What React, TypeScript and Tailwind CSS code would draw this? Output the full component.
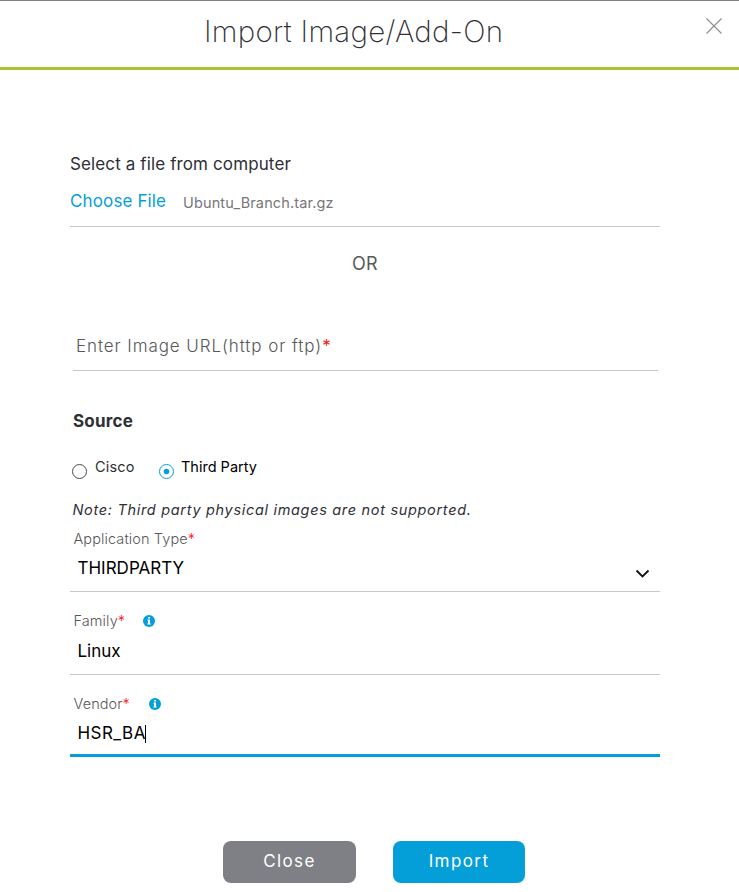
import type { ReactNode } from "react";

function InfoIcon() {
  return (
    <svg width="12" height="12" viewBox="0 0 12 12" className="shrink-0">
      <circle cx="6" cy="6" r="6" fill="#049fd9" />
      <path d="M5.1 2h1.9v1.5H5.1zM4.4 4.6H7v4h.7v.9H4.3v-.9H5V5.5h-.6z" fill="#fff" />
    </svg>
  );
}

function Radio({ checked }: { checked?: boolean }) {
  return (
    <svg width="15" height="15" viewBox="0 0 15 15" className="mt-[4px] shrink-0">
      <circle cx="7.5" cy="7.5" r="7" fill="#fff" stroke={checked ? "#049fd9" : "#4a4a52"} />
      {checked && <circle cx="7.5" cy="7.5" r="2.8" fill="#049fd9" />}
    </svg>
  );
}

function Label({ children, info }: { children: ReactNode; info?: ReactNode }) {
  return (
    <div className="flex h-5 items-center pl-[3.5px] text-[14.5px] font-light leading-5 text-[#58585b]">
      <span className="tracking-[0.1px]">
        {children}
        <span className="text-[#f00]">*</span>
      </span>
      {info}
    </div>
  );
}

export default function App() {
  return (
    <div className="h-[892px] w-[739px] overflow-hidden bg-white font-['Inter',sans-serif] text-[#2f2f36]">
      <header className="relative h-[70px] border-b-[3px] border-t border-b-[#abc233] border-t-[#808080]">
        <h1 className="ml-[204px] mt-[10px] whitespace-nowrap text-[29.5px] font-extralight leading-10 tracking-[0.27px]">Import Image/Add-On</h1>
        <svg width="16" height="16" viewBox="0 0 16 16" className="absolute left-[706px] top-[17px]">
          <path d="M.5.5l15 15M15.5.5l-15 15" stroke="#8b8c92" strokeWidth="1.1" />
        </svg>
      </header>

      <main className="ml-[70px] w-[590px] pt-[82px]">
        <section className="h-[75px] border-b border-[#c8c8c8]">
          <p className="text-[17px] leading-6 tracking-[0.12px]">Select a file from computer</p>
          <div className="mt-[13px] flex h-6 items-center whitespace-nowrap">
            <span className="w-[113px] text-[17px] leading-6 tracking-[0.13px] text-[#049fd9]">Choose File</span>
            <span className="pt-[3px] text-[14.5px] leading-6 tracking-[0.13px] text-[#77777b]">Ubuntu_Branch.tar.gz</span>
          </div>
        </section>
        <p className="mt-[25px] text-center text-[18px] leading-6 tracking-[0.3px] text-[#58585b]">OR</p>

        <div className="ml-[3px] mt-[58px] h-[37px] w-[585px] whitespace-nowrap border-b border-[#c8c8c8] pl-[3px] text-[17px] font-light leading-6 tracking-[0.92px] text-[#58585b]">
          Enter Image URL(http or ftp)<span className="text-[#f00]">*</span>
        </div>

        <h2 className="ml-[3px] mt-[38px] text-[17px] font-bold leading-6 tracking-[0.2px]">Source</h2>
        <div className="ml-[2px] mt-[24px] flex h-[30px] items-start whitespace-nowrap text-[14.5px] leading-5">
          <div className="flex h-5 w-[87px] gap-[8px]">
            <span className="pt-[3px]"><Radio /></span>
            <span className="tracking-[0.15px]">Cisco</span>
          </div>
          <div className="flex h-5 gap-[7px] text-black">
            <span className="pt-[3px]"><Radio checked /></span>
            <span>Third Party</span>
          </div>
        </div>
        <p className="ml-[2.5px] mt-[13px] whitespace-nowrap text-[14.5px] italic leading-5 tracking-[0.68px]">Note: Third party physical images are not supported.</p>

        <div className="mt-[9px] h-[63px] border-b border-[#c8c8c8]">
          <Label>Application Type</Label>
          <div className="mt-[7px] flex justify-between pl-[7.5px] text-[17px] leading-6 text-black">
            <span>THIRDPARTY</span>
            <svg width="15" height="9" viewBox="0 0 15 9" className="mr-[10px] mt-[13px]">
              <path d="M1.5 1.5l6 6 6-6" fill="none" stroke="#111" strokeWidth="1.8" />
            </svg>
          </div>
        </div>
        <div className="mt-[19px] h-[64px] border-b border-[#c8c8c8]">
          <Label info={<span className="ml-[18px]"><InfoIcon /></span>}>Family</Label>
          <p className="mt-[8px] pl-[7.5px] text-[17px] leading-6 text-black">Linux</p>
        </div>
        <div className="mt-[19px] h-[63px] border-b-[3px] border-[#049fd9]">
          <Label info={<span className="ml-[19.5px]"><InfoIcon /></span>}>Vendor</Label>
          <div className="mt-[7px] flex items-center pl-[7.5px] text-[17px] leading-6 text-black">
            <span className="tracking-[0.45px]">HSR_BA</span>
            <span className="-ml-px mt-[1px] h-[18px] w-px bg-black" />
          </div>
        </div>
      </main>

      <footer className="ml-[223px] mt-[84px] flex gap-[37px] text-[17px] tracking-[1.4px] text-white">
        <button className="h-[42px] w-[133px] rounded-lg bg-[#7f8085]">Close</button>
        <button className="h-[42px] w-[132px] rounded-lg bg-[#049fd9]">Import</button>
      </footer>
    </div>
  );
}
